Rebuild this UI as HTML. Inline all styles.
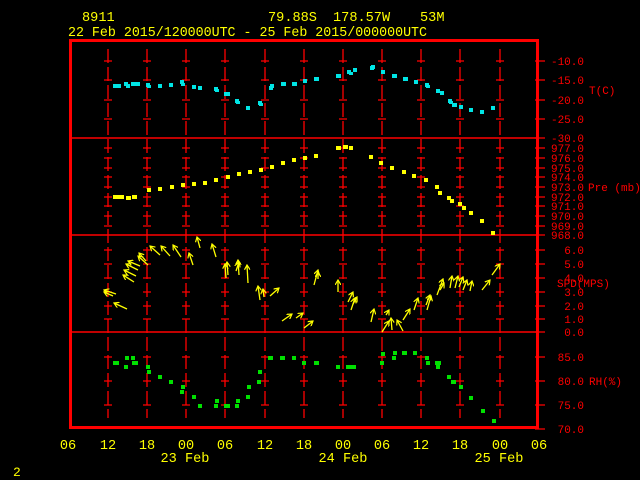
<!DOCTYPE html>
<html><head><style>
html,body{margin:0;padding:0;background:#000;width:640px;height:480px;overflow:hidden}
svg{display:block}
text{font-family:"Liberation Mono","DejaVu Sans Mono",monospace;}
</style></head><body>
<svg width="640" height="480" viewBox="0 0 640 480" xmlns="http://www.w3.org/2000/svg">
<defs>
<marker id="ah" markerWidth="6" markerHeight="6" refX="5" refY="3" orient="auto" markerUnits="userSpaceOnUse">
<path d="M0,0 L5,3 L0,6" fill="none" stroke="#ffff00" stroke-width="1.2"/>
</marker>
</defs>
<rect width="640" height="480" fill="#000"/>
<g fill="#ffff00" font-size="13.6">
<text x="82" y="21">8911</text>
<text x="268" y="21">79.88S</text>
<text x="333" y="21">178.57W</text>
<text x="420" y="21">53M</text>
<text x="68" y="36" textLength="359" lengthAdjust="spacingAndGlyphs">22 Feb 2015/120000UTC - 25 Feb 2015/000000UTC</text>
</g>
<!-- vertical grid -->
<g stroke="#ff0000" stroke-width="1.3" stroke-dasharray="14,4">
<line x1="108" y1="49" x2="108" y2="418"/><line x1="147" y1="49" x2="147" y2="418"/>
<line x1="186" y1="49" x2="186" y2="418"/><line x1="225" y1="49" x2="225" y2="418"/>
<line x1="265" y1="49" x2="265" y2="418"/><line x1="304" y1="49" x2="304" y2="418"/>
<line x1="343" y1="49" x2="343" y2="418"/><line x1="382" y1="49" x2="382" y2="418"/>
<line x1="421" y1="49" x2="421" y2="418"/><line x1="460" y1="49" x2="460" y2="418"/>
<line x1="500" y1="49" x2="500" y2="418"/>
</g>
<!-- horizontal ticks -->
<g stroke="#ff0000" stroke-width="1.3">
<path d="
M104,61h8M143,61h8M182,61h8M221,61h8M261,61h8M300,61h8M339,61h8M378,61h8M417,61h8M456,61h8M496,61h8M535,61h10
M104,80h8M143,80h8M182,80h8M221,80h8M261,80h8M300,80h8M339,80h8M378,80h8M417,80h8M456,80h8M496,80h8M535,80h10
M104,100h8M143,100h8M182,100h8M221,100h8M261,100h8M300,100h8M339,100h8M378,100h8M417,100h8M456,100h8M496,100h8M535,100h10
M104,119h8M143,119h8M182,119h8M221,119h8M261,119h8M300,119h8M339,119h8M378,119h8M417,119h8M456,119h8M496,119h8M535,119h10
M104,148h8M143,148h8M182,148h8M221,148h8M261,148h8M300,148h8M339,148h8M378,148h8M417,148h8M456,148h8M496,148h8M535,148h10
M104,158h8M143,158h8M182,158h8M221,158h8M261,158h8M300,158h8M339,158h8M378,158h8M417,158h8M456,158h8M496,158h8M535,158h10
M104,168h8M143,168h8M182,168h8M221,168h8M261,168h8M300,168h8M339,168h8M378,168h8M417,168h8M456,168h8M496,168h8M535,168h10
M104,177h8M143,177h8M182,177h8M221,177h8M261,177h8M300,177h8M339,177h8M378,177h8M417,177h8M456,177h8M496,177h8M535,177h10
M104,187h8M143,187h8M182,187h8M221,187h8M261,187h8M300,187h8M339,187h8M378,187h8M417,187h8M456,187h8M496,187h8M535,187h10
M104,197h8M143,197h8M182,197h8M221,197h8M261,197h8M300,197h8M339,197h8M378,197h8M417,197h8M456,197h8M496,197h8M535,197h10
M104,206h8M143,206h8M182,206h8M221,206h8M261,206h8M300,206h8M339,206h8M378,206h8M417,206h8M456,206h8M496,206h8M535,206h10
M104,216h8M143,216h8M182,216h8M221,216h8M261,216h8M300,216h8M339,216h8M378,216h8M417,216h8M456,216h8M496,216h8M535,216h10
M104,226h8M143,226h8M182,226h8M221,226h8M261,226h8M300,226h8M339,226h8M378,226h8M417,226h8M456,226h8M496,226h8M535,226h10
M104,250h8M143,250h8M182,250h8M221,250h8M261,250h8M300,250h8M339,250h8M378,250h8M417,250h8M456,250h8M496,250h8M535,250h10
M104,264h8M143,264h8M182,264h8M221,264h8M261,264h8M300,264h8M339,264h8M378,264h8M417,264h8M456,264h8M496,264h8M535,264h10
M104,278h8M143,278h8M182,278h8M221,278h8M261,278h8M300,278h8M339,278h8M378,278h8M417,278h8M456,278h8M496,278h8M535,278h10
M104,292h8M143,292h8M182,292h8M221,292h8M261,292h8M300,292h8M339,292h8M378,292h8M417,292h8M456,292h8M496,292h8M535,292h10
M104,306h8M143,306h8M182,306h8M221,306h8M261,306h8M300,306h8M339,306h8M378,306h8M417,306h8M456,306h8M496,306h8M535,306h10
M104,319h8M143,319h8M182,319h8M221,319h8M261,319h8M300,319h8M339,319h8M378,319h8M417,319h8M456,319h8M496,319h8M535,319h10
M104,357h8M143,357h8M182,357h8M221,357h8M261,357h8M300,357h8M339,357h8M378,357h8M417,357h8M456,357h8M496,357h8M535,357h10
M104,381h8M143,381h8M182,381h8M221,381h8M261,381h8M300,381h8M339,381h8M378,381h8M417,381h8M456,381h8M496,381h8M535,381h10
M104,405h8M143,405h8M182,405h8M221,405h8M261,405h8M300,405h8M339,405h8M378,405h8M417,405h8M456,405h8M496,405h8M535,405h10
M535,138h10M535,235h10M535,332h10M535,429h10"/>
</g>
<!-- separators -->
<g stroke="#ff0000" stroke-width="1.5">
<line x1="70" y1="138" x2="538" y2="138"/>
<line x1="70" y1="235" x2="538" y2="235"/>
<line x1="70" y1="332" x2="538" y2="332"/>
</g>
<!-- frame -->
<rect x="70.5" y="40.5" width="467" height="387" fill="none" stroke="#ff0000" stroke-width="3"/>
<!-- right labels -->
<g fill="#ff0000" font-size="11" text-anchor="end">
<text x="584" y="65">-10.0</text><text x="584" y="84">-15.0</text><text x="584" y="104">-20.0</text>
<text x="584" y="123">-25.0</text><text x="584" y="142">-30.0</text>
<text x="584" y="152">977.0</text><text x="584" y="162">976.0</text><text x="584" y="172">975.0</text>
<text x="584" y="181">974.0</text><text x="584" y="191">973.0</text><text x="584" y="201">972.0</text>
<text x="584" y="210">971.0</text><text x="584" y="220">970.0</text><text x="584" y="230">969.0</text>
<text x="584" y="239">968.0</text>
<text x="584" y="254">6.0</text><text x="584" y="268">5.0</text><text x="584" y="282">4.0</text>
<text x="584" y="296">3.0</text><text x="584" y="310">2.0</text><text x="584" y="323">1.0</text>
<text x="584" y="336">0.0</text>
<text x="584" y="361">85.0</text><text x="584" y="385">80.0</text><text x="584" y="409">75.0</text>
<text x="584" y="433">70.0</text>
</g>
<g fill="#ff0000" font-size="11">
<text x="589" y="94">T(C)</text>
<text x="588" y="191">Pre (mb)</text>
<text x="557" y="287">SPD(MPS)</text>
<text x="589" y="385">RH(%)</text>
</g>
<!-- bottom labels -->
<g fill="#ffff00" font-size="13.6" text-anchor="middle">
<text x="68" y="449">06</text><text x="108" y="449">12</text><text x="147" y="449">18</text>
<text x="186" y="449">00</text><text x="225" y="449">06</text><text x="265" y="449">12</text>
<text x="304" y="449">18</text><text x="343" y="449">00</text><text x="382" y="449">06</text>
<text x="421" y="449">12</text><text x="460" y="449">18</text><text x="500" y="449">00</text>
<text x="539" y="449">06</text>
<text x="185" y="462">23 Feb</text><text x="343" y="462">24 Feb</text><text x="499" y="462">25 Feb</text>
</g>
<text x="13" y="476" fill="#ffff00" font-size="13">2</text>
<!-- T points -->
<g fill="#00e5e5">
<rect x="113" y="84" width="5" height="4"/><rect x="116" y="84" width="5" height="4"/><rect x="124" y="82" width="4" height="4"/><rect x="126" y="84" width="4" height="4"/>
<rect x="131" y="82" width="5" height="4"/><rect x="136" y="82" width="4" height="4"/><rect x="146" y="83" width="4" height="4"/><rect x="147" y="85" width="4" height="3"/>
<rect x="158" y="84" width="4" height="4"/><rect x="169" y="83" width="4" height="4"/><rect x="180" y="80" width="4" height="4"/><rect x="181" y="83" width="4" height="3"/>
<rect x="192" y="85" width="4" height="4"/><rect x="198" y="86" width="4" height="4"/><rect x="214" y="87" width="4" height="4"/><rect x="215" y="89" width="4" height="3"/>
<rect x="224" y="92" width="6" height="4"/><rect x="235" y="99" width="4" height="4"/><rect x="236" y="101" width="4" height="3"/><rect x="246" y="106" width="4" height="4"/>
<rect x="258" y="101" width="4" height="4"/><rect x="259" y="103" width="4" height="3"/><rect x="269" y="86" width="4" height="4"/><rect x="270" y="84" width="4" height="4"/>
<rect x="281" y="82" width="5" height="4"/><rect x="292" y="82" width="5" height="4"/><rect x="303" y="79" width="4" height="4"/><rect x="314" y="77" width="5" height="4"/>
<rect x="336" y="74" width="5" height="4"/><rect x="347" y="70" width="4" height="4"/><rect x="349" y="72" width="4" height="3"/><rect x="353" y="68" width="4" height="4"/>
<rect x="370" y="66" width="4" height="4"/><rect x="371" y="65" width="4" height="4"/><rect x="381" y="70" width="4" height="4"/><rect x="392" y="74" width="5" height="4"/>
<rect x="403" y="77" width="5" height="4"/><rect x="414" y="80" width="4" height="4"/><rect x="425" y="83" width="4" height="4"/><rect x="426" y="85" width="4" height="3"/>
<rect x="436" y="89" width="4" height="4"/><rect x="440" y="91" width="4" height="4"/><rect x="448" y="99" width="4" height="4"/><rect x="449" y="101" width="4" height="3"/>
<rect x="452" y="103" width="5" height="4"/><rect x="459" y="105" width="4" height="4"/><rect x="469" y="108" width="4" height="4"/><rect x="480" y="110" width="4" height="4"/>
<rect x="491" y="106" width="4" height="4"/>
</g>
<!-- Pressure points -->
<g fill="#ffff00">
<rect x="113" y="195" width="6" height="4"/><rect x="119" y="195" width="5" height="4"/><rect x="126" y="196" width="5" height="4"/><rect x="132" y="195" width="5" height="4"/>
<rect x="147" y="188" width="4" height="4"/><rect x="158" y="187" width="4" height="4"/><rect x="170" y="185" width="4" height="4"/><rect x="181" y="183" width="4" height="4"/>
<rect x="192" y="182" width="4" height="4"/><rect x="203" y="181" width="4" height="4"/><rect x="214" y="178" width="4" height="4"/><rect x="226" y="175" width="4" height="4"/>
<rect x="237" y="172" width="4" height="4"/><rect x="248" y="170" width="4" height="4"/><rect x="259" y="168" width="4" height="4"/><rect x="270" y="165" width="4" height="4"/>
<rect x="281" y="161" width="4" height="4"/><rect x="292" y="158" width="4" height="4"/><rect x="303" y="156" width="4" height="4"/><rect x="314" y="154" width="4" height="4"/>
<rect x="336" y="146" width="5" height="4"/><rect x="343" y="145" width="5" height="4"/><rect x="349" y="146" width="4" height="4"/><rect x="369" y="155" width="4" height="4"/>
<rect x="379" y="161" width="4" height="4"/><rect x="390" y="166" width="4" height="4"/><rect x="402" y="170" width="4" height="4"/><rect x="412" y="174" width="4" height="4"/>
<rect x="424" y="178" width="4" height="4"/><rect x="435" y="185" width="4" height="4"/><rect x="438" y="191" width="4" height="4"/><rect x="447" y="196" width="4" height="4"/>
<rect x="450" y="199" width="4" height="4"/><rect x="458" y="202" width="4" height="4"/><rect x="462" y="206" width="4" height="4"/><rect x="469" y="211" width="4" height="4"/>
<rect x="480" y="219" width="4" height="4"/><rect x="491" y="231" width="4" height="4"/>
</g>
<!-- RH points -->
<g fill="#00e000">
<rect x="113" y="361" width="6" height="4"/><rect x="125" y="356" width="4" height="4"/><rect x="124" y="365" width="4" height="4"/><rect x="131" y="356" width="4" height="4"/>
<rect x="132" y="361" width="6" height="4"/><rect x="146" y="365" width="4" height="4"/><rect x="147" y="370" width="4" height="4"/><rect x="158" y="375" width="4" height="4"/>
<rect x="169" y="380" width="4" height="4"/><rect x="180" y="390" width="4" height="4"/><rect x="181" y="385" width="4" height="4"/><rect x="192" y="395" width="4" height="4"/>
<rect x="198" y="404" width="4" height="4"/><rect x="214" y="404" width="4" height="4"/><rect x="215" y="399" width="4" height="4"/><rect x="224" y="404" width="6" height="4"/>
<rect x="235" y="404" width="4" height="4"/><rect x="236" y="399" width="4" height="4"/><rect x="246" y="395" width="4" height="4"/><rect x="247" y="385" width="4" height="4"/>
<rect x="257" y="380" width="4" height="4"/><rect x="258" y="370" width="4" height="4"/><rect x="268" y="356" width="5" height="4"/><rect x="280" y="356" width="5" height="4"/>
<rect x="292" y="356" width="4" height="4"/><rect x="302" y="361" width="4" height="4"/><rect x="314" y="361" width="5" height="4"/>
<rect x="336" y="365" width="4" height="4"/><rect x="346" y="365" width="6" height="4"/><rect x="351" y="365" width="5" height="4"/><rect x="380" y="361" width="4" height="4"/>
<rect x="381" y="352" width="4" height="4"/><rect x="392" y="356" width="4" height="4"/><rect x="393" y="351" width="4" height="4"/><rect x="402" y="351" width="5" height="4"/>
<rect x="413" y="351" width="4" height="4"/><rect x="425" y="356" width="4" height="4"/><rect x="426" y="361" width="4" height="4"/><rect x="435" y="361" width="6" height="4"/>
<rect x="436" y="365" width="4" height="4"/><rect x="447" y="375" width="4" height="4"/><rect x="451" y="380" width="5" height="4"/><rect x="459" y="385" width="4" height="4"/>
<rect x="469" y="396" width="4" height="4"/><rect x="481" y="409" width="4" height="4"/><rect x="492" y="419" width="4" height="4"/>
</g>
<!-- wind arrows -->
<g stroke="#ffff00" stroke-width="1.3" fill="none" marker-end="url(#ah)">
<line x1="116" y1="294" x2="104" y2="290"/><line x1="113" y1="296" x2="104" y2="292"/>
<line x1="127" y1="309" x2="114" y2="303"/>
<line x1="134" y1="282" x2="123" y2="275"/><line x1="136" y1="276" x2="124" y2="270"/>
<line x1="138" y1="270" x2="126" y2="264"/><line x1="140" y1="266" x2="128" y2="261"/>
<line x1="148" y1="265" x2="138" y2="256"/><line x1="146" y1="261" x2="139" y2="253"/>
<line x1="160" y1="255" x2="150" y2="246"/><line x1="170" y1="256" x2="161" y2="246"/>
<line x1="181" y1="257" x2="173" y2="245"/><line x1="193" y1="265" x2="189" y2="253"/>
<line x1="200" y1="248" x2="197" y2="237"/><line x1="216" y1="257" x2="212" y2="244"/>
<line x1="226" y1="278" x2="225" y2="264"/><line x1="228" y1="275" x2="227" y2="262"/>
<line x1="239" y1="275" x2="238" y2="260"/><line x1="236" y1="271" x2="239" y2="262"/>
<line x1="248" y1="283" x2="247" y2="265"/>
<line x1="260" y1="300" x2="258" y2="286"/><line x1="264" y1="297" x2="263" y2="289"/>
<line x1="270" y1="296" x2="279" y2="288"/>
<line x1="282" y1="321" x2="292" y2="314"/><line x1="296" y1="318" x2="303" y2="313"/>
<line x1="304" y1="328" x2="313" y2="321"/>
<line x1="314" y1="285" x2="318" y2="270"/><line x1="318" y1="279" x2="318" y2="272"/>
<line x1="338" y1="292" x2="338" y2="280"/>
<line x1="348" y1="302" x2="353" y2="292"/><line x1="351" y1="310" x2="355" y2="298"/><line x1="353" y1="304" x2="357" y2="297"/>
<line x1="371" y1="322" x2="374" y2="309"/>
<line x1="382" y1="332" x2="389" y2="321"/><line x1="386" y1="315" x2="389" y2="310"/><line x1="392" y1="330" x2="391" y2="318"/>
<line x1="403" y1="331" x2="397" y2="320"/>
<line x1="403" y1="320" x2="410" y2="309"/><line x1="414" y1="310" x2="418" y2="298"/>
<line x1="427" y1="310" x2="431" y2="296"/><line x1="426" y1="305" x2="430" y2="295"/>
<line x1="437" y1="295" x2="443" y2="279"/><line x1="440" y1="290" x2="444" y2="283"/>
<line x1="450" y1="288" x2="452" y2="276"/><line x1="455" y1="288" x2="458" y2="276"/>
<line x1="459" y1="287" x2="463" y2="277"/><line x1="463" y1="290" x2="467" y2="280"/>
<line x1="470" y1="291" x2="472" y2="281"/><line x1="482" y1="290" x2="490" y2="280"/>
<line x1="492" y1="275" x2="500" y2="264"/>
</g>
</svg>
</body></html>
